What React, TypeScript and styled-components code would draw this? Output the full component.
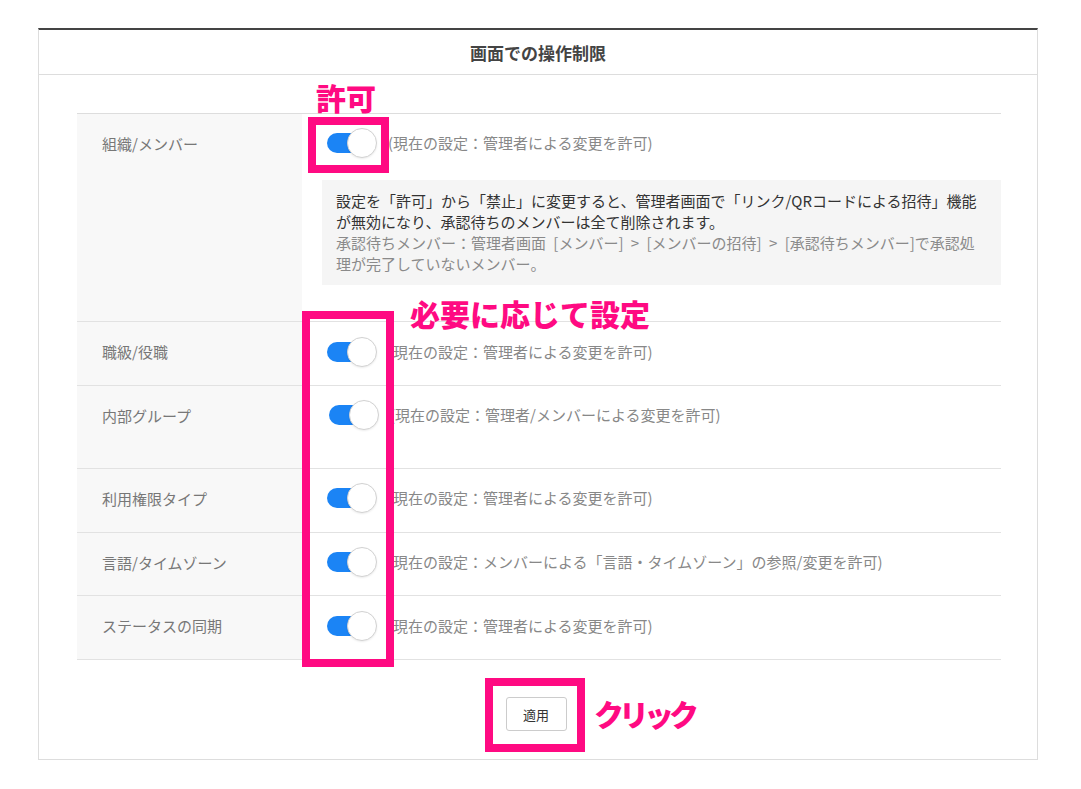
import styled, { createGlobalStyle } from "styled-components";

const GlobalStyle = createGlobalStyle`
  body {
    margin: 0;
    background: #fff;
    font-family: "Noto Sans CJK JP", "Noto Sans", sans-serif;
  }
`;

const MAGENTA = "#ff0a82";

const Page = styled.div`
  position: relative;
  width: 1081px;
  height: 789px;
  padding: 28px 0 0 38px;
  box-sizing: border-box;
`;

const Panel = styled.section`
  width: 1000px;
  box-sizing: border-box;
  border: 1px solid #ddd;
  border-top: 2px solid #444;
`;

const Header = styled.header`
  height: 44px;
  display: flex;
  align-items: center;
  justify-content: center;
  border-bottom: 1px solid #ddd;
`;

const Title = styled.h2`
  margin: 0;
  font-size: 17px;
  font-weight: 700;
  color: #444;
`;

const Body = styled.div`
  padding: 38px 36px 0 38px;
`;

const Table = styled.div`
  border-top: 1px solid #ddd;
`;

const Row = styled.div<{ $height: number }>`
  display: grid;
  grid-template-columns: 225px 1fr;
  border-bottom: 1px solid #e2e2e2;
  min-height: ${(p) => p.$height}px;
`;

const Label = styled.div`
  background: #f8f8f8;
  padding: 19px 25px 0;
  font-size: 15px;
  line-height: 22px;
  color: #777;
`;

const Value = styled.div<{ $top: number; $bottom?: number }>`
  padding: ${(p) => p.$top}px 0 ${(p) => p.$bottom ?? 0}px;
`;

const SettingLine = styled.div<{ $shift?: number }>`
  display: flex;
  align-items: center;
  gap: 11px;
  margin-left: ${(p) => 25 + (p.$shift ?? 0)}px;
`;

const Toggle = styled.span`
  position: relative;
  display: inline-block;
  width: 50px;
  height: 30px;
  flex: none;

  &::before {
    content: "";
    position: absolute;
    left: 0;
    top: 5px;
    width: 44px;
    height: 20px;
    border-radius: 10px;
    background: #1b84f5;
  }

  &::after {
    content: "";
    position: absolute;
    right: 0;
    top: 0;
    width: 28px;
    height: 28px;
    border-radius: 50%;
    background: #fff;
    border: 1px solid #d2d2d2;
    box-shadow: 0 1px 2px rgba(0, 0, 0, 0.08);
  }
`;

const Current = styled.span`
  font-size: 15px;
  line-height: 22px;
  color: #888;
  white-space: nowrap;
`;

const Note = styled.div`
  margin: 22px 0 0 20px;
  padding: 10px 14px 11px;
  background: #f5f5f5;
  font-size: 15px;
  line-height: 21px;
  white-space: nowrap;
`;

const NoteText = styled.p<{ $muted?: boolean }>`
  margin: 0;
  color: ${(p) => (p.$muted ? "#8a8a8a" : "#333")};
  word-spacing: ${(p) => (p.$muted ? "4px" : "0")};
`;

const Footer = styled.div`
  display: flex;
  justify-content: center;
  padding: 37px 6px 28px 0;
`;

const ApplyButton = styled.button`
  width: 61px;
  height: 34px;
  background: #fff;
  border: 1px solid #ccc;
  border-radius: 3px;
  font-family: inherit;
  font-size: 13px;
  color: #333;
  padding: 0;
`;

/* annotation overlays */
const Frame = styled.div<{ x: number; y: number; w: number; h: number }>`
  position: absolute;
  left: ${(p) => p.x}px;
  top: ${(p) => p.y}px;
  width: ${(p) => p.w}px;
  height: ${(p) => p.h}px;
  box-sizing: border-box;
  border: 8px solid ${MAGENTA};
  pointer-events: none;
`;

const Callout = styled.div<{ x: number; y: number; $tight?: boolean }>`
  position: absolute;
  left: ${(p) => p.x}px;
  top: ${(p) => p.y}px;
  font-size: 30px;
  line-height: 30px;
  font-weight: 900;
  color: ${MAGENTA};
  white-space: nowrap;
  letter-spacing: ${(p) => (p.$tight ? "-5px" : "0")};
`;

const settings = [
  { label: "職級/役職", text: "(現在の設定：管理者による変更を許可)", top: 15, height: 63 },
  { label: "内部グループ", text: "(現在の設定：管理者/メンバーによる変更を許可)", top: 14, height: 82, shift: 2 },
  { label: "利用権限タイプ", text: "(現在の設定：管理者による変更を許可)", top: 14, height: 63 },
  { label: "言語/タイムゾーン", text: "(現在の設定：メンバーによる「言語・タイムゾーン」の参照/変更を許可)", top: 14, height: 62 },
  { label: "ステータスの同期", text: "(現在の設定：管理者による変更を許可)", top: 15, height: 63 },
];

function App() {
  return (
    <Page>
      <GlobalStyle />
      <Panel>
        <Header>
          <Title>画面での操作制限</Title>
        </Header>
        <Body>
          <Table>
            <Row $height={207}>
              <Label>組織/メンバー</Label>
              <Value $top={14} $bottom={36}>
                <SettingLine>
                  <Toggle />
                  <Current>(現在の設定：管理者による変更を許可)</Current>
                </SettingLine>
                <Note>
                  <NoteText>
                    設定を「許可」から「禁止」に変更すると、管理者画面で「リンク/QRコードによる招待」機能
                    <br />
                    が無効になり、承認待ちのメンバーは全て削除されます。
                  </NoteText>
                  <NoteText $muted>
                    承認待ちメンバー：管理者画面 [メンバー] &gt; [メンバーの招待] &gt; [承認待ちメンバー]で承認処
                    <br />
                    理が完了していないメンバー。
                  </NoteText>
                </Note>
              </Value>
            </Row>
            {settings.map((s) => (
              <Row key={s.label} $height={s.height}>
                <Label>{s.label}</Label>
                <Value $top={s.top}>
                  <SettingLine $shift={s.shift}>
                    <Toggle />
                    <Current>{s.text}</Current>
                  </SettingLine>
                </Value>
              </Row>
            ))}
          </Table>
          <Footer>
            <ApplyButton>適用</ApplyButton>
          </Footer>
        </Body>
      </Panel>

      <Callout x={316} y={82}>許可</Callout>
      <Frame x={308} y={117} w={81} h={56} />
      <Callout x={410} y={298}>必要に応じて設定</Callout>
      <Frame x={302} y={311} w={92} h={356} />
      <Frame x={485} y={678} w={100} h={74} />
      <Callout x={594} y={698} $tight>クリック</Callout>
    </Page>
  );
}

export default App;
